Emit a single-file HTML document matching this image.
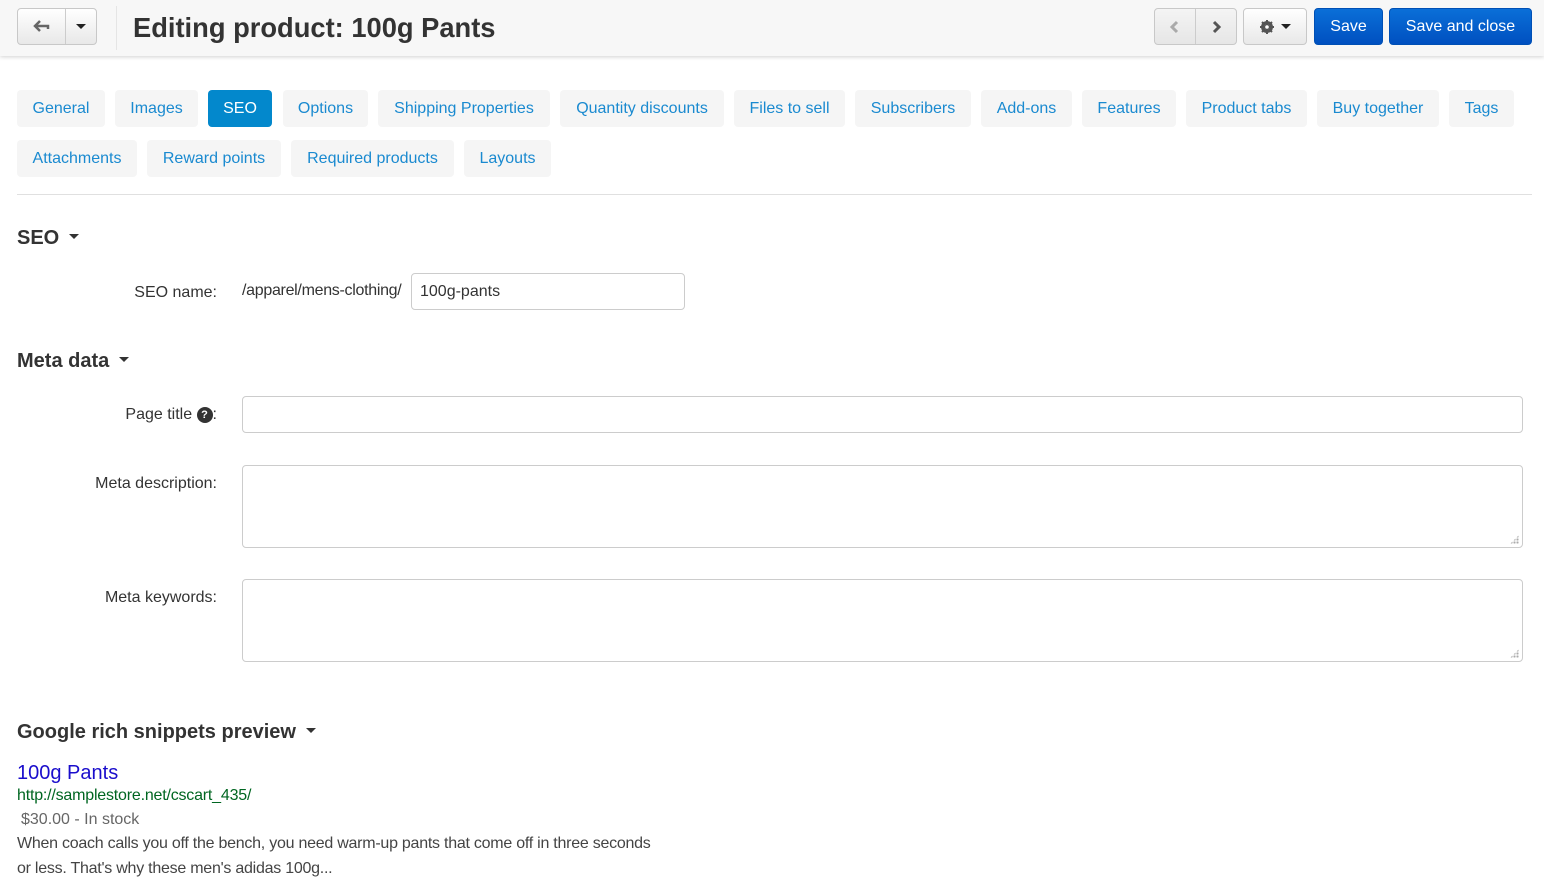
<!DOCTYPE html>
<html><head><style>
*{box-sizing:border-box;margin:0;padding:0}
body{width:1544px;height:887px;overflow:hidden;background:#fff;font-family:"Liberation Sans",Arial,sans-serif;color:#333;position:relative}
.a{position:absolute}
.hdr{left:0;top:0;width:1544px;height:56px;background:#f7f7f7;box-shadow:0 1px 4px rgba(0,0,0,.18)}
.btn{position:absolute;border:1px solid #c8c8c8;border-radius:4px;background:linear-gradient(#fff,#e8e8e8);height:37px}
.tab{position:absolute;height:37px;background:#f5f5f5;border-radius:4px;color:#1a8ad0;font-size:16px;line-height:37px;text-align:center}
.tab.on{background:#0388cc;color:#fff}
.blue{position:absolute;top:8px;height:37px;border-radius:4px;background:linear-gradient(#0a6fd8,#0050c0);border:1px solid #0050b5;color:#fff;font-size:16px;line-height:35px;text-align:center}
h2{position:absolute;font-size:20px;font-weight:bold;color:#333}
.car{display:inline-block;width:0;height:0;border-left:5px solid transparent;border-right:5px solid transparent;border-top:5px solid #333;vertical-align:middle;margin-left:10px;position:relative;top:-2px}
.lbl{position:absolute;font-size:16px;text-align:right;width:200px;left:17px}
.inp{position:absolute;border:1px solid #ccc;border-radius:4px;background:#fff}
.grip{position:absolute;right:3px;bottom:3px;width:9px;height:9px;background:radial-gradient(circle,#aaa 1px,transparent 1.2px) 0 0/3px 3px;clip-path:polygon(100% 0,100% 100%,0 100%)}
</style></head><body>
<div class="a hdr"></div>
<div class="btn" style="left:17px;top:8px;width:80px"></div>
<div class="a" style="left:65px;top:9px;width:1px;height:35px;background:#ccc"></div>
<svg class="a" style="left:32px;top:18px" width="20" height="16" viewBox="0 0 20 16"><path d="M8 3 L3 8 L8 13 M3 8 H16 V11" fill="none" stroke="#666" stroke-width="2.5"/></svg>
<div class="a" style="left:76px;top:24px;border-left:5px solid transparent;border-right:5px solid transparent;border-top:5px solid #222"></div>
<div class="a" style="left:116px;top:6px;width:1px;height:44px;background:#e5e5e5"></div>
<div class="a" style="left:133px;top:12px;font-size:27.3px;font-weight:bold;color:#333">Editing product: 100g Pants</div>
<div class="btn" style="left:1154px;top:8px;width:83px;background:linear-gradient(#f4f4f4,#e6e6e6)"></div>
<div class="a" style="left:1195px;top:9px;width:1px;height:35px;background:#ccc"></div>
<svg class="a" style="left:1169px;top:20px" width="12" height="14"><path d="M8 2 L3 7 L8 12" fill="none" stroke="#aaa" stroke-width="3"/></svg>
<svg class="a" style="left:1211px;top:20px" width="12" height="14"><path d="M3 2 L8 7 L3 12" fill="none" stroke="#555" stroke-width="3"/></svg>
<div class="btn" style="left:1243px;top:8px;width:64px"></div>
<svg class="a" style="left:1260px;top:20px" width="14" height="14" viewBox="0 0 14 14"><circle cx="7" cy="7" r="4.5" fill="none" stroke="#555" stroke-width="3"/><path d="M7 0V14M0 7H14M2 2L12 12M12 2L2 12" stroke="#555" stroke-width="2"/><circle cx="7" cy="7" r="1.8" fill="#fff"/></svg>
<div class="a" style="left:1281px;top:24px;border-left:5px solid transparent;border-right:5px solid transparent;border-top:5px solid #222"></div>
<div class="blue" style="left:1314px;width:69px">Save</div>
<div class="blue" style="left:1389px;width:143px">Save and close</div>

<div class="tab" style="left:17px;top:90px;width:88px">General</div>
<div class="tab" style="left:115px;top:90px;width:83px">Images</div>
<div class="tab on" style="left:208px;top:90px;width:64px">SEO</div>
<div class="tab" style="left:283px;top:90px;width:85px">Options</div>
<div class="tab" style="left:378px;top:90px;width:172px">Shipping Properties</div>
<div class="tab" style="left:560px;top:90px;width:164px">Quantity discounts</div>
<div class="tab" style="left:734px;top:90px;width:111px">Files to sell</div>
<div class="tab" style="left:855px;top:90px;width:116px">Subscribers</div>
<div class="tab" style="left:981px;top:90px;width:91px">Add-ons</div>
<div class="tab" style="left:1082px;top:90px;width:94px">Features</div>
<div class="tab" style="left:1186px;top:90px;width:121px">Product tabs</div>
<div class="tab" style="left:1317px;top:90px;width:122px">Buy together</div>
<div class="tab" style="left:1449px;top:90px;width:65px">Tags</div>
<div class="tab" style="left:17px;top:140px;width:120px">Attachments</div>
<div class="tab" style="left:147px;top:140px;width:134px">Reward points</div>
<div class="tab" style="left:291px;top:140px;width:163px">Required products</div>
<div class="tab" style="left:464px;top:140px;width:87px">Layouts</div>
<div class="a" style="left:17px;top:194px;width:1515px;height:1px;background:#e0e0e0"></div>

<h2 style="left:17px;top:227px">SEO<span class="car"></span></h2>
<div class="lbl" style="top:284px">SEO name:</div>
<div class="a" style="left:242px;top:282px;font-size:16px;letter-spacing:-0.3px">/apparel/mens-clothing/</div>
<div class="inp" style="left:411px;top:273px;width:274px;height:37px"></div>
<div class="a" style="left:420px;top:283px;font-size:16px">100g-pants</div>

<h2 style="left:17px;top:350px">Meta data<span class="car"></span></h2>
<div class="lbl" style="top:406px">Page title <span style="display:inline-block;width:16px;height:16px;border-radius:8px;background:#333;color:#fff;font-size:11px;line-height:16px;text-align:center;font-weight:bold;vertical-align:1px">?</span>:</div>
<div class="inp" style="left:242px;top:396px;width:1281px;height:37px"></div>
<div class="lbl" style="top:475px">Meta description:</div>
<div class="inp" style="left:242px;top:465px;width:1281px;height:83px"><div class="grip"></div></div>
<div class="lbl" style="top:589px">Meta keywords:</div>
<div class="inp" style="left:242px;top:579px;width:1281px;height:83px"><div class="grip"></div></div>

<h2 style="left:17px;top:721px">Google rich snippets preview<span class="car"></span></h2>
<div class="a" style="left:17px;top:762px;font-size:20px;color:#1a0dcc">100g Pants</div>
<div class="a" style="left:17px;top:787px;font-size:16px;color:#006621;letter-spacing:-0.2px">http://samplestore.net/cscart_435/</div>
<div class="a" style="left:21px;top:811px;font-size:16px;color:#666">$30.00 - In stock</div>
<div class="a" style="left:17px;top:831px;font-size:16px;line-height:25px;width:680px;color:#444;letter-spacing:-0.25px">When coach calls you off the bench, you need warm-up pants that come off in three seconds<br>or less. That's why these men's adidas 100g...</div>
</body></html>
